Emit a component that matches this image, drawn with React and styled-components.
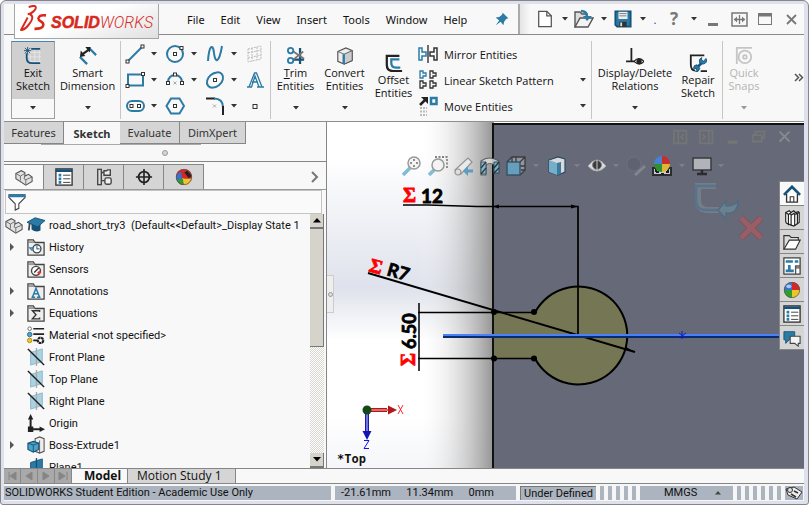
import React from "react";
import styled, { createGlobalStyle, css } from "styled-components";

const ui = '"Noto Sans", "Open Sans", sans-serif';
const narrow = '"Open Sans", "Noto Sans", sans-serif';
const list = 'Roboto, "Liberation Sans", sans-serif';
const blue = "#2b7ba5";
const deep = "#165277";
const ink = "#333";
const grey = "#868686";

const Global = createGlobalStyle`
  *, *::before, *::after { box-sizing: border-box; }
  body { margin: 0; background: #fff; font-family: ${ui}; font-size: 11px; color: #111; }
  button, input { font: inherit; color: inherit; }
  button { display: flex; align-items: center; justify-content: center; padding: 0; border: 0; background: none; white-space: nowrap; }
  svg { display: block; flex: none; }
`;

/* ---------- Frame ---------- */
const Frame = styled.div`
  display: flex; flex-direction: column; height: 100vh; min-height: 400px; overflow: hidden;
  padding: 3px 4px 3px 3px; background: #dfe0ee; border: 1px solid ${grey};
  border-radius: 6px 6px 3px 3px;
`;
const TitleBar = styled.header`
  display: flex; flex: none; height: 31px; background: #f8f8f8; border-bottom: 1px solid #8a8a8a; position: relative;
`;
const LogoBox = styled.div`
  display: flex; align-items: center; gap: 4px; position: relative; z-index: 1;
  width: 145px; height: 35px; margin: 0 0 -4px 10px; padding: 0 0 0 5px; flex: none;
  border: 1px solid #a6a6a6; border-top: 0; background: linear-gradient(160deg, #fff 45%, #e0e0e0);
  svg { margin-bottom: 5px; }
`;
const LogoText = styled.span`
  color: #d8291d; font: italic 700 16px/20px "Liberation Sans", sans-serif; margin-top: 4px;
  -webkit-text-stroke: 0.5px #d8291d;
  span { font-family: Roboto, sans-serif; font-weight: 300; -webkit-text-stroke: 0; }
`;
const MenuBar = styled.nav`
  display: flex; align-items: center; margin-left: 20px; flex: 1; border-right: 2px solid #aaa;
`;
const MenuItem = styled.button`
  height: 30px; padding: 0 8px;
`;
const Pin = styled.button` margin: 0 6px 0 auto; width: 20px; height: 24px; `;
const Quick = styled.div` display: flex; align-items: center; flex: none; padding-left: 12px; background: linear-gradient(90deg, #e4e4e4, #f8f8f8 10px); `;
const IconButton = styled.button`
  width: ${(p) => p.$w || 26}px; height: ${(p) => p.$h || 26}px; flex: none;
`;

/* ---------- Command ribbon ---------- */
const Ribbon = styled.section`
  display: flex; flex: none; height: 87px; padding: 6px 0 2px 7px; background: #f8f8f8;
  border-bottom: 1px solid #8f8f8f; font-family: ${narrow};
`;
const Rule = styled.span` width: 1px; height: 78px; background: #c6c6c6; flex: none; margin: 0 ${(p) => p.$r || 0}px 0 0; `;
const Command = styled.button`
  flex-direction: column; justify-content: flex-start; flex: none; align-self: flex-start;
  width: ${(p) => p.$w}px; height: 78px; padding-top: ${(p) => (p.$low ? 13 : 6)}px; line-height: 13px;
  color: ${(p) => (p.disabled ? "#b4b4b4" : "#111")};
  > svg:first-child { width: 18px; height: 18px; margin-bottom: 1px; }
  > svg:last-child { margin-top: 14px; }
  ${(p) => p.$on && css`
    background: linear-gradient(#d0d0d0 58px, #f8f8f8 58px);
    border: 1px solid #a0a0a0; border-top-color: #4287b5; padding-top: 5px;
    box-shadow: inset 0 -20px 0 -1px #f8f8f8;
  `}
`;
const ToolGrid = styled.div` display: grid; grid-template-columns: repeat(4, 40px); grid-template-rows: repeat(3, 26px); flex: none; width: 145px; overflow: hidden; `;
const ToolCell = styled.div` display: flex; align-items: center; `;
const ListTools = styled.div` display: flex; flex-direction: column; flex: 1; min-width: 150px; `;
const ListTool = styled.button` height: 26px; justify-content: flex-start; gap: 6px; padding-right: 5px; > svg:nth-of-type(2) { margin-left: auto; } `;
const Overflow = styled.button` width: 39px; height: 72px; flex: none; justify-content: flex-end; `;

/* ---------- Body ---------- */
const Body = styled.main` display: flex; flex: 1; min-height: 0; `;
const Side = styled.aside`
  display: flex; flex-direction: column; width: 323px; flex: none; background: #f8f8f8;
  border-right: 1px solid ${grey};
`;
const TabRow = styled.div` display: flex; flex: none; height: 22px; `;
const Tab = styled.button`
  width: ${(p) => p.$w}px; height: 22px; font-size: 11px; color: ${ink};
  background: ${(p) => (p.$on ? "#f8f8f8" : "#d5d5d5")}; font-weight: ${(p) => (p.$on ? 700 : 400)};
  border: solid ${grey}; border-width: ${(p) => (p.$on ? 0 : "0 1px 1px 0")};
`;
const Grip = styled.div`
  display: flex; align-items: center; justify-content: center; height: 18px; flex: none; border-bottom: 1px solid ${grey};
  background: linear-gradient(#aaa, #aaa) 37px 0 / 160px 1px no-repeat;
  span { width: 6px; height: 6px; border-radius: 3px; border: 1px solid #999; background: #d5d5d5; }
`;
const PaneTabs = styled.div` display: flex; flex: none; height: 27px; margin-top: 1px; border-bottom: 1px solid #999; border-top: 1px solid #f8f8f8; `;
const PaneTab = styled.button`
  width: 40px; border: solid ${grey}; border-width: 1px 1px 0 0; background: ${(p) => (p.$on ? "#f8f8f8" : "#d5d5d5")};
  svg { width: 18px; height: 18px; }
`;
const More = styled.button` margin: 0 5px 0 auto; width: 12px; `;
const Filter = styled.label`
  display: flex; align-items: center; gap: 4px; height: 24px; flex: none; margin: 0 4px 0 1px; padding-left: 2px;
  border: 1px solid #c4c4c4; background: #fafafa;
  svg { width: 18px; height: 18px; }
  input { flex: 1; min-width: 0; border: 0; outline: 0; background: none; }
`;
const TreeArea = styled.div` display: flex; flex: 1; min-height: 0; `;
const Tree = styled.ul` flex: 1; min-width: 0; margin: 0; padding: 0; list-style: none; overflow: hidden; font-family: ${list}; `;
const Row = styled.li`
  display: flex; align-items: center; height: 22px; white-space: pre; padding-left: ${(p) => (p.$root ? 1 : 5)}px;
  > svg:nth-of-type(2) { width: 18px; height: 18px; margin: 0 4px 0 ${(p) => (p.$root ? 4 : 10)}px; }
  > svg:first-child { height: 18px; width: ${(p) => (p.$root ? 18 : 8)}px; }
`;
const Scroll = styled.div`
  display: flex; flex-direction: column; width: 14px; margin-right: 2px; flex: none;
  background: repeating-conic-gradient(#d8d6d0 0 25%, #fff 0 50%) 0 0 / 2px 2px;
`;
const ScrollButton = styled.button`
  height: 15px; flex: none; background: #d6d3cb; border: solid #777; border-width: 0 1px 2px 0;
  margin-top: ${(p) => (p.$end ? "auto" : 0)};
`;
const Thumb = styled.div` height: 118px; background: #d6d3cb; border: solid #777; border-width: 0 1px 1px 0; `;

/* ---------- Graphics area ---------- */
const Canvas = styled.section` position: relative; flex: 1; min-width: 0; background: #fff; overflow: hidden; `;
const Sketch = styled.svg` width: 100%; height: 100%; `;
const ViewTools = styled.div`
  position: absolute; top: 31px; left: 0; right: 0; display: flex; justify-content: center; padding-right: 5px; opacity: 0.85;
`;
const DocButtons = styled.div` position: absolute; top: 2px; right: 6px; display: flex; `;
const Confirm = styled.div` position: absolute; top: 59px; right: 40px; display: flex; opacity: 0.6; `;
const TaskPane = styled.div` position: absolute; top: 59px; right: 0; width: 25px; border: solid ${grey}; border-width: 1px 0 0 1px; `;
const TaskButton = styled.button`
  width: 24px; height: 24px; border-bottom: 1px solid ${grey}; background: ${(p) => (p.$on ? "#f9f9f9" : "#d5d5d5")};
  svg { width: 18px; height: 18px; }
`;
const Handle = styled.button`
  position: absolute; left: 0; top: 153px; width: 7px; height: 38px; background: #eee; border: 1px solid #ccc; border-left: 0;
  span { width: 5px; height: 5px; border: 1px solid #999; border-radius: 3px; background: #ddd; }
`;

/* ---------- Bottom ---------- */
const SheetTabs = styled.div` display: flex; flex: none; height: 16px; background: #f8f8f8; border: solid ${grey}; border-width: 1px 0; font-family: ${narrow}; `;
const NavButton = styled.button` width: 17px; height: 14px; background: #a9a9a9; border: solid #888; border-width: 0 1px 0 0; flex: none; `;
const SheetTab = styled.button`
  width: ${(p) => p.$w}px; height: 14px; font-size: 12px; line-height: 14px; font-weight: ${(p) => (p.$on ? 700 : 400)};
  justify-content: flex-start; padding-left: ${(p) => (p.$on ? 12 : 9)}px;
  background: ${(p) => (p.$on ? "#f8f8f8" : "#d5d5d5")}; border: solid ${grey}; border-width: ${(p) => (p.$on ? 0 : "0 1px")};
`;
const Status = styled.footer`
  display: flex; flex: none; height: 17px; padding: 2px 1px 1px 0; gap: 4px; background: #f6f6f6;
  font-family: ${list}; font-size: 11px; line-height: 14px; white-space: nowrap;
`;
const Panel = styled.div`
  display: flex; align-items: center; justify-content: space-around; flex: ${(p) => p.$grow || "none"}; width: ${(p) => p.$w}px; overflow: hidden;
  background: #abb4bf; ${(p) => p.$inset && "border: solid #777; border-width: 1px 0 0 1px;"}
  ${(p) => p.$start && "justify-content: flex-start; padding-left: 1px;"}
`;
const Coordinates = styled(Panel)` justify-content: space-between; padding: 0 22px 0 6px; `;
const Units = styled(Panel)` justify-content: space-between; padding: 0 12px 0 24px; `;
const Stripes = styled.div` width: ${(p) => p.$w}px; flex: none; background: repeating-linear-gradient(90deg, #abb4bf 0 4px, #f6f6f6 4px 8px); `;

/* ---------- Icons ---------- */
const Caret = ({ c = "#333" }) => <svg width="6" height="4"><path d="M0 0h6L3 3.5z" fill={c} /></svg>;
const I = ({ s = 20, children }) => <svg width={s} height={s} viewBox="0 0 20 20" fill="none" stroke={blue} strokeWidth="2">{children}</svg>;
const Sq = ({ x, y }) => <rect x={x - 1.5} y={y - 1.5} width="3" height="3" fill="#fff" stroke={ink} strokeWidth="1" />;

const Line = () => <I><path d="M3 17L17 3" /><Sq x={2.5} y={17.5} /><Sq x={17.5} y={2.5} /></I>;
const Circle = () => <I><circle cx="10" cy="10" r="8" /><Sq x={10} y={10} /><Sq x={16.5} y={4} /></I>;
const Spline = () => <I><path d="M3 17C4 1 8 -1 9 9S14 20 17 2" /></I>;
const Hatch = () => <I><path d="M3 5l13-3v13L3 18zM3 9l13-3M3 14l13-3M7 4v13M12 3v13" stroke="#bbb" strokeWidth="1" strokeDasharray="2 1" /></I>;
const RectI = () => <I><rect x="3" y="4.500" width="15" height="11" /><Sq x={2.5} y={16} /><Sq x={18} y={4} /></I>;
const Arc = () => <I><path d="M3 12a7 7 0 0 1 14 0" /><Sq x={3} y={13} /><Sq x={17} y={13} /><Sq x={10} y={4.5} /><path d="M8.500 11.500l3 3m0-3l-3 3" stroke="#aaa" strokeWidth="1" /></I>;
const Ellipse = () => <I><ellipse cx="10" cy="10" rx="9" ry="6.500" transform="rotate(-40 10 10)" /><Sq x={10} y={10} /></I>;
const LetterA = () => <I><path d="M2 17h5M12 17h7M4 17L9.500 3h2L17 17M6.500 17L10 6l4 11M7 12h6" strokeWidth="1.300" /></I>;
const Slot = () => <I><rect x="2" y="5" width="17" height="10" rx="5" /><Sq x={6.5} y={10} /><Sq x={14} y={10} /></I>;
const Poly = () => <I><path d="M6 2.500h8.500L19 10l-4.500 7.500H6L1.500 10z" /><Sq x={10} y={10} /></I>;
const Fillet = () => <I><path d="M1 2.500h9" stroke="#222" /><path d="M9 2.500q9 0 9 9" /><path d="M18 10v9" stroke="#222" /><path d="M8 8.500l3 3m0-3l-3 3" stroke="#aaa" strokeWidth="1" /></I>;
const Point = () => <I><rect x="8" y="8.500" width="4" height="4" stroke={ink} strokeWidth="1" /></I>;

const ExitIcon = () => <I><path d="M7 2v17M12 2v17M17 2v17M3 6h16M3 11h16M3 16h16" stroke="#e6e6e6" strokeWidth="1" /><path d="M18 2H8M3 7v5q0 6 6 6h9" stroke={deep} /><path d="M0 4h8M4 0v8M1 1l6 6M7 1L1 7" strokeWidth="1" stroke={deep} /></I>;
const DimIcon = () => <I><path d="M1 11l8 8M12 2l7 7" strokeWidth="2.500" /><path d="M4 8l7-5" stroke="#222" strokeWidth="2.500" /><path d="M1 11l1-7 5 6zM13 0l-6 0 5 6z" fill="#222" stroke="none" /></I>;
const TrimIcon = () => <I><path d="M7 14h12M14.500 1v18" strokeWidth="2.500" stroke={deep} /><path d="M7 5l12 8M7 14l11-9" stroke="#777" strokeWidth="2" /><circle cx="4" cy="4" r="3" /><circle cx="4" cy="15" r="3" /></I>;
const ConvertIcon = () => <I><path d="M2 5l9-4 7 3v11l-9 4-7-3z" fill="#eee" stroke="#555" strokeWidth="1.300" /><path d="M9 8l9-4v11l-9 4z" fill="#ccc" stroke="#555" strokeWidth="1" /><path d="M2 5l7 3" stroke="#666" strokeWidth="1" /><path d="M8.500 8v11" strokeWidth="2.500" /></I>;
const OffsetIcon = () => <I><path d="M16 2H2v10q0 7 7 7h10" stroke="#222" strokeWidth="2.500" /><path d="M16 6H7v4q0 5 5 5h5" strokeWidth="2.500" /></I>;
const MirrorIcon = () => <I><path d="M1 4v12h3v-4h4V8H4V4z" strokeWidth="1.500" /><path d="M10 1v18" stroke="#222" strokeWidth="1.300" /><path d="M19 4v12h-3v-4h-4V8h4V4z" stroke={ink} strokeWidth="1.500" /></I>;
const PatternIcon = () => <I>{[[0, 0], [10, 0], [0, 10], [10, 10]].map(([x, y], i) => <path key={i} transform={`translate(${x} ${y})`} d="M2 1v7h3V6h3V3H5V1z" stroke={i ? ink : blue} strokeWidth="1.300" />)}</I>;
const MoveIcon = () => <I><path d="M2 9l6-6" stroke="#222" strokeWidth="2.500" /><path d="M3 1h7v7z" fill="#222" stroke="none" /><rect x="13" y="2" width="5.500" height="6" strokeWidth="2.500" /><path d="M2 12h7M2 19h7M2 15.500h7" stroke="#bbb" strokeDasharray="2 1" /></I>;
const RelIcon = () => <I><path d="M6 1v15M0 16h11" stroke="#222" /><path d="M9 16q5-6 11 0q-5 6-11 0" fill="#fff" stroke="#222" strokeWidth="1.300" /><circle cx="14.500" cy="16" r="2" fill="#222" stroke="#222" /></I>;
const RepairIcon = () => <I><path d="M17 1.500H2v10q0 7 5 7M13 19h7" stroke="#222" /><path d="M8 16l8-8" stroke={deep} strokeWidth="3" /><path d="M19 5l-3 3-2-1 0-3q-4 2-2 6q5 3 8-2z" fill={blue} stroke={deep} strokeWidth="1" /><path d="M5 16l3 0 1 3-2 1q4 0 5-4l-3-4q-4 0-4 4z" fill={blue} stroke={deep} strokeWidth="1" /></I>;
const SnapIcon = () => <I><path d="M2 19V1h17" stroke="#c5c5c5" /><circle cx="11" cy="11" r="7" stroke="#c5c5c5" /><circle cx="11" cy="11" r="2" stroke="#c5c5c5" /></I>;

const Logo = () => (
  <svg width="27" height="27" viewBox="0 0 28 26" preserveAspectRatio="none" fill="none" stroke="#d8291d" strokeWidth="2" strokeLinejoin="round">
    <path d="M9 2Q18 -1 16 4Q13 8 8 9" /><path d="M10 9Q16 11 9 19Q5 24 1 24L8 12" />
    <path d="M27 10Q20 9 19 13C19 16 26 16 24 20Q23 23 15 23" strokeWidth="2.500" />
  </svg>
);
const PinI = () => <I s={14}><path d="M11 1l8 8-3 1-3 4-1 5-4-5-7 5 5-7-5-4 5-1 4-3z" fill={blue} stroke="none" /></I>;
const NewI = () => <I s={18}><path d="M3 1.500h9l5 5v12H3z" fill="#fff" stroke="#555" strokeWidth="1.400" /><path d="M12 1.500v5h5" stroke="#555" strokeWidth="1.400" /></I>;
const OpenI = () => <I><path d="M1 18V3h5l2 2h5v4" fill="#ddd" stroke="#555" strokeWidth="1.400" /><path d="M1 18L6 9h13l-5 9z" fill="#f3f3f3" stroke="#555" strokeWidth="1.400" /><path d="M7 2q6 0 6 6" strokeWidth="2.500" /><path d="M9 7h9l-5 5z" fill={blue} stroke="none" /></I>;
const SaveI = () => <I s={18}><path d="M1.500 1.500h17v17h-15l-2-2z" fill={blue} stroke={deep} /><path d="M5 2h10v8H5z" fill="#eee" stroke="none" /><path d="M6 4h8M6 6.500h8" stroke="#777" strokeWidth="1" /><path d="M6 13h8v6H6z" fill="#333" stroke="none" /><path d="M8 14v4" stroke="#ddd" /></I>;
const MinI = () => <svg width="10" height="14"><path d="M0 12.500h10" stroke="#777" strokeWidth="3" /></svg>;
const SpanI = () => <svg width="17" height="15" fill="none" stroke="#777"><rect x="1" y="1" width="15" height="13" strokeWidth="1.500" /><path d="M8.500 3v9M3 7.500h11" strokeWidth="1.300" /><path d="M3 7.500l3-3v6zM14 7.500l-3-3v6z" fill="#777" stroke="none" /></svg>;
const MaxI = () => <svg width="14" height="12" fill="none" stroke="#777"><rect x=".5" y=".5" width="13" height="11" /><path d="M0 2h14" strokeWidth="3" /></svg>;
const CloseI = ({ c = "#777" }) => <svg width="11" height="11"><path d="M1 1l9 9M10 1l-9 9" stroke={c} strokeWidth="1.800" /></svg>;
const HelpMark = styled.span` font: 700 17px/20px "Noto Sans", sans-serif; color: #777; `;
const Dot = styled.span` width: 12px; color: #24489c; text-align: center; flex: none; `;

const Part = () => <I><path d="M1 6l6-3 4 2v4l4-2 4 3v5l-7 4L1 12z" fill="#e2e2e2" stroke="#555" strokeWidth="1.200" /><path d="M1 6l5 3v5M6 9l5-3M11 9l-1 3 2 1v5M12 13l7-3" stroke="#666" strokeWidth="1" /></I>;
const ListI = () => <I><rect x="1" y="1" width="18" height="18" fill="#fff" stroke="#333" strokeWidth="1.500" /><path d="M1 3h18" stroke={deep} strokeWidth="3" /><path d="M4 8h3M4 12h3M4 16h3" stroke={blue} strokeWidth="3" /><path d="M9 8h8M9 12h8M9 16h8" stroke="#333" strokeWidth="1" /></I>;
const ConfigI = () => <I><path d="M7 5h5M7 14h5" stroke="#444" strokeWidth="1.500" /><rect x="3" y="1.500" width="4" height="17" fill="#ddd" stroke="#444" strokeWidth="1.500" /><path d="M10 3h3l1-1h3v6h-7z" fill="#eee" stroke="#444" strokeWidth="1.500" /><rect x="11" y="11" width="7" height="7" rx="2" fill="#eee" stroke="#444" strokeWidth="1.500" /></I>;
const TargetI = () => <I><circle cx="10" cy="10" r="6" stroke="#222" /><path d="M10 1v18M1 10h18" stroke="#222" strokeWidth="1.800" /></I>;
const Ball = () => <I><g stroke="none"><path d="M10 10V1A9 9 0 0 0 1 10z" fill="#3b6fd0" /><path d="M10 10V1a9 9 0 0 1 9 9z" fill="#d42828" /><path d="M10 10h9a9 9 0 0 1-9 9z" fill="#efc52e" /><path d="M10 10v9a9 9 0 0 1-9-9z" fill="#2d9f2d" /></g><circle cx="10" cy="10" r="8.500" stroke="#555" strokeWidth=".8" /><ellipse cx="6.500" cy="6" rx="3" ry="2" fill="#fff" opacity=".6" stroke="none" /></I>;
const Appearance = () => <I><g stroke="none"><circle cx="10" cy="10" r="9" fill="#d42828" /><path d="M1 10q3-6 6-5l1 7v6a9 9 0 0 1-7-8" fill="#3b6fd0" /><path d="M8 11q6 2 11 0q-2 8-9 8z" fill="#efc52e" /><path d="M2 13l7-1v7q-5 0-7-6" fill="#2d9f2d" /></g><path d="M12 4l5 6" stroke="#222" strokeWidth="4" /><circle cx="10" cy="10" r="8.500" stroke="#555" strokeWidth=".8" /></I>;
const Funnel = () => <I><path d="M1 2h18v3l-7 7v5l-4 2v-7L1 5z" fill="#fff" stroke="#444" strokeWidth="1.200" /><path d="M1 3h18" strokeWidth="3.500" /></I>;
const Cap = () => <I><path d="M5 9v6q5 4 10 1V9z" fill={deep} stroke="none" /><path d="M0 7l9-5 11 3-8 7z" fill={blue} stroke={deep} strokeWidth="1" /><path d="M3 8l-1 8" stroke="#444" strokeWidth="2" /></I>;
const Folder = ({ children }) => <I><path d="M1 19V2h6l2 3h10v14z" fill="#eee" stroke="#444" strokeWidth="1.400" /><path d="M1 4.500h8" stroke="#777" strokeWidth="1.500" />{children}</I>;
const Hist = () => <Folder><circle cx="11" cy="12" r="4.500" fill="#fff" stroke="#444" strokeWidth="1.500" /><path d="M11 9v3h3M6 14l-3-3h5" strokeWidth="1.300" /></Folder>;
const Sens = () => <Folder><circle cx="10" cy="12" r="5" fill="#fff" stroke="#444" strokeWidth="1.500" /><path d="M8 14l5-5" stroke="#333" strokeWidth="1.500" /><path d="M12 15l3-2" stroke="#e33" strokeWidth="3" /></Folder>;
const Annot = () => <Folder><path d="M5 17h4M11 17h4M6 17l4-10 4 10M7.500 13h5" strokeWidth="1.700" /></Folder>;
const Equa = () => <Folder><path d="M14 9V7.500H6l4 4.500-4 4.500h8V15" stroke="#333" strokeWidth="1.500" /></Folder>;
const Mat = () => <I><path d="M7 3h12M7 9h12" stroke="#222" strokeWidth="1.800" /><circle cx="3" cy="3" r="2" fill="#fff" stroke="#666" strokeWidth="1" /><circle cx="3" cy="9.500" r="2.500" fill="#46a6d5" stroke="#367" strokeWidth="1" /><circle cx="3" cy="16" r="2.500" fill="#f4c430" stroke="#a80" strokeWidth="1" /><path d="M7 16h4" stroke="#222" /><circle cx="15" cy="16" r="3" stroke="#222" strokeWidth="2.500" strokeDasharray="3 .6" /></I>;
const Plane = ({ solid }) => <I><path d="M4 5l13-4v14L4 19z" fill={solid ? blue : "#a9d2e2"} stroke={solid ? deep : "#8bb4c5"} strokeWidth="1" /><path d="M10.500 0v20" stroke={solid ? deep : "#aaa"} strokeWidth="1.500" />{!solid && <path d="M1 1l18 18" stroke="#222" strokeWidth="1.600" />}</I>;
const Origin = () => <I><path d="M4 4v13h12" stroke="#222" strokeWidth="2.200" /><path d="M1 6l3-6 3 6zM14 14l6 3-6 3zM1 14h6v6H1z" fill="#222" stroke="none" /></I>;
const Extrude = () => <I><path d="M9 3l5-2 5 2v14l-5 2-5-2z" fill="#eee" stroke="#555" strokeWidth="1.200" /><path d="M14 5v14" stroke="#555" strokeWidth="1" /><path d="M1 8l6-2 6 2v7l-6 3-6-3z" fill="#4ba1c8" stroke={deep} strokeWidth="1.200" /><path d="M1 8l6 2 6-2M7 10v8" stroke={deep} strokeWidth="1" /></I>;
const Twist = ({ on }) => <svg width="8" height="18"><path d="M1 5l4 4-4 4z" fill={on ? "#555" : "none"} /></svg>;

const ZoomI = ({ area }) => <I><path d="M8 12l-7 7" stroke="#6fb0d0" strokeWidth="3.500" />{area && <path d="M7 1h12v12" stroke="#444" strokeDasharray="2 1.500" strokeWidth="1.300" />}<circle cx={area ? 10 : 12} cy={area ? 9 : 7} r="6" fill="#f3f3f3" stroke="#888" strokeWidth="1.500" />{!area && <path d="M12 3v2M12 9v2M8 7h2M14 7h2" stroke="#555" strokeWidth="1.500" />}</I>;
const PrevI = () => <I><path d="M1 14L14 2l4 4L7 18z" fill="#eee" stroke="#888" strokeWidth="1.200" /><circle cx="4" cy="16" r="3" fill="#ddd" stroke="#888" strokeWidth="1.200" /><path d="M19 15h-8" stroke="#4994c0" strokeWidth="3" /><path d="M9 15l5-5v10z" fill="#4994c0" stroke="none" /></I>;
const SectionI = () => <I><path d="M1 5q8-6 18 0v12h-5V9q-4-3-8 0v10H1z" fill="#ddd" stroke="#555" strokeWidth="1.200" /><path d="M1 6h5v12H1zM14 6h5v11h-5z" fill="#7bb9d6" stroke="#254c60" strokeWidth="1" /><path d="M1 12l5-6M1 18l5-6M14 12l5-6M14 17l5-5" stroke="#222" strokeWidth="1.200" /></I>;
const OrientI = () => <I><path d="M1 6l5-5h13v13l-5 5M14 6l5-5" fill="#9a9ca6" stroke="#333" strokeWidth="1.300" /><path d="M6 1v5M10 1v5M14 10h5M15 14h4" stroke="#333" strokeWidth="1.300" /><rect x="1" y="6" width="13" height="13" fill="#68a8c7" stroke="#254c60" strokeWidth="1.300" /></I>;
const CubeI = () => <I><path d="M2 4l9-3 7 2v13l-7 3-9-3z" fill="#eee" stroke="#246" strokeWidth="1.200" /><path d="M2 4l8 3v12l-8-3z" fill="#79bad8" stroke="none" /><path d="M10 7l4-1v12l-4 1z" fill="#357da2" stroke="none" /></I>;
const EyeI = () => <I><path d="M1 10q9-12 18 0q-9 10-18 0" fill="#eee" stroke="#bbb" strokeWidth="1" /><circle cx="10" cy="9" r="4.500" fill="#333" stroke="#888" strokeWidth="1" /><path d="M10 4v10" stroke="#ddd" strokeWidth="1" /></I>;
const EditI = () => <I><circle cx="8" cy="8" r="7" fill="#5d6170" stroke="#707380" strokeWidth="1" /><path d="M9 19l10-9" stroke="#888b94" strokeWidth="3" /></I>;
const SceneI = () => <I><path d="M1 12h18v7H1z" fill="#ddd" stroke="#222" /><path d="M4 16h3M9 18h3M14 16h3M4 12v4M16 12v4" stroke="#111" strokeWidth="2" /><g stroke="none"><path d="M10 8V0a8 8 0 0 0-8 8z" fill="#4785e0" /><path d="M10 8V0a8 8 0 0 1 8 8z" fill="#d22" /><path d="M10 8h8a8 8 0 0 1-8 8z" fill="#efc52e" /><path d="M10 8v8a8 8 0 0 1-8-8z" fill="#292" /></g></I>;
const ScreenI = () => <I><rect x="1" y="2" width="18" height="12" fill="#bfc1c8" stroke="#333" strokeWidth="1.500" /><path d="M10 14v4M5 18h10" stroke="#222" strokeWidth="2.500" /></I>;
const Home = () => <I><path d="M4 10v9h12v-9" fill="#fff" stroke="#333" strokeWidth="1.500" /><path d="M1 11l9-9 9 9" strokeWidth="3" stroke={deep} /><path d="M8 19v-6h4v6" stroke="#333" strokeWidth="1.200" /></I>;
const Books = () => <I><path d="M3 4l4-2 2 2 3-2 2 2 3-1 1 1v11l-6 4-8-3-1-2z" fill="#fff" stroke="#222" strokeWidth="1.300" /><path d="M3 4l3 2v12M7 5l2 1v13M11 5l2 1v13M6 6l3-2M9 7l4-3M13 6l5-2M16 5v12" stroke="#222" strokeWidth="1.300" /></I>;
const FolderOpen = () => <I><path d="M1 18V3h6l2 2h8v3" fill="#ddd" stroke="#333" strokeWidth="1.300" /><path d="M1 18L7 8h12l-5 10z" fill="#fff" stroke="#333" strokeWidth="1.300" /></I>;
const Palette = () => <I><rect x="1" y="1" width="18" height="18" fill="#fff" stroke="#333" strokeWidth="1.300" /><path d="M3 5h8M13 5h4M7 9v5M3 15.500h9" stroke={blue} strokeWidth="3" /><path d="M14 19v-9h5M14 12h5" stroke="#555" strokeWidth="1.500" /></I>;
const Chat = () => <I><path d="M1 3h12v9H7l-4 4v-4H1z" fill={blue} stroke={deep} strokeWidth="1" /><path d="M8 8h11v8h-2v3l-4-3H8z" fill="#f4f4f4" stroke="#444" strokeWidth="1.200" /></I>;

const docPaths = [
  "M2 3h14v14H2zM7 3v14M13 7l-3 3 3 3", "M2 3h14v14H2zM12 3v14M5 7l3 3-3 3", "M4 15h11M4 16.500h11",
  "M3 8h10v7H3zM6 8V4h10v7h-3", "M4 4l11 11M15 4L4 15",
];
const docNames = ["Tile left", "Tile right", "Minimize document", "Restore document", "Close document"];

/* ---------- Data ---------- */
const grid = [
  [Line, 1, "Line"], [Circle, 1, "Circle"], [Spline, 1, "Spline"], [Hatch, 0, "Sketch plane"],
  [RectI, 1, "Rectangle"], [Arc, 1, "Arc"], [Ellipse, 1, "Ellipse"], [LetterA, 0, "Text"],
  [Slot, 1, "Slot"], [Poly, 0, "Polygon"], [Fillet, 1, "Fillet"], [Point, 0, "Point"],
];
const tree = [
  [Hist, "History", 1], [Sens, "Sensors"], [Annot, "Annotations", 1], [Equa, "Equations", 1], [Mat, "Material <not specified>"],
  [Plane, "Front Plane"], [Plane, "Top Plane"], [Plane, "Right Plane"], [Origin, "Origin"], [Extrude, "Boss-Extrude1", 1],
];
const ZoomArea = () => <ZoomI area />;
const view = [[ZoomI, "Zoom to fit"], [ZoomArea, "Zoom to area"], [PrevI, "Previous view"], [SectionI, "Section view"], [OrientI, "View orientation", 15], [CubeI, "Display style", 14], [EyeI, "Hide or show", 13], [EditI, "Edit appearance"], [SceneI, "Apply scene", 14], [ScreenI, "View settings", 13]];
const tasks = [[Home, "Home"], [Books, "Design library"], [FolderOpen, "File explorer"], [Palette, "View palette"], [Ball, "Appearances"], [ListI, "Custom properties"], [Chat, "Forum"]];

const Cmd = ({ icon: Icon, top, bottom, caret = true, ...p }) => (
  <Command {...p}><Icon /><span>{top}</span><span>{bottom}</span>{caret && <Caret c={p.disabled ? "#999" : ink} />}</Command>
);

const Drawing = () => (
  <Sketch role="img" aria-label="Sketch with dimensions 12, R7 and 6.50">
    <defs>
      <linearGradient id="sky" x1="0" y1="0" x2="0" y2="1"><stop offset=".1" stopColor="#fff" /><stop offset=".48" stopColor="#dfe2ec" /><stop offset=".63" stopColor="#fff" /><stop offset=".85" stopColor="#fff" /><stop offset="1" stopColor="#f5f6f9" /></linearGradient>
      <linearGradient id="shade"><stop offset="0" stopColor="#fff" stopOpacity="0" /><stop offset=".4" stopColor="#c8c8c8" stopOpacity=".3" /><stop offset="1" stopColor="#929292" /></linearGradient>
    </defs>
    <rect width="167" height="100%" fill="url(#sky)" />
    <rect x="90" width="77" height="100%" fill="url(#shade)" />
    <rect x="166" y="2" width="100%" height="100%" fill="#666977" stroke="#111" strokeWidth="2" />
    <g transform="translate(-327 -122)" fill="none" stroke="#000" strokeWidth="2">
      <path d="M494 312.500H535A49 49 0 1 1 535 358.500H494" fill="#747654" stroke="none" />
      <path d="M535 312.500A49 49 0 1 1 535 358.500" />
      <path d="M418 312.500H535M418 358.500H535M419 303v68" strokeWidth="1.500" />
      <path d="M403 205h25l49 1.500h101V335" strokeWidth="1.700" />
      <path d="M493 206.500l6-2v4zM578 206.500l-7-2v4zM635 352l-9-5-1 3z" fill="#000" stroke="none" />
      <path d="M368 273L635 352" />
      <g fill="#000" stroke="none"><circle cx="494" cy="312" r="3" /><circle cx="494" cy="358.500" r="3" /><circle cx="534" cy="312" r="3" /><circle cx="534" cy="358.500" r="3" /></g>
      <path d="M443 335h338" stroke="#4c80f5" /><path d="M443 337h338" stroke="#092b70" />
      <path d="M682 331v8M679 333l7 5M686 333l-7 5" stroke="#1418b8" strokeWidth="1" />
      <g fill="#000" stroke="#000" strokeWidth=".8" fontFamily="Lato, sans-serif" fontWeight="700" fontSize="19">
        <text x="421" y="203">12</text>
        <text transform="translate(386 275) rotate(16)" fontSize="18">R7</text>
        <text transform="translate(416 349) rotate(-90)" fontSize="18">6.50</text>
      </g>
      <g fill="#f00" stroke="#f00" strokeWidth=".8" fontFamily="Liberation Serif, serif" fontWeight="700" fontSize="20">
        <text x="403" y="202">Σ</text><text transform="translate(368 271) rotate(16)">Σ</text><text transform="translate(415 366) rotate(-90)">Σ</text>
      </g>
      <path d="M367 410h20" stroke="#a51d1d" strokeWidth="4" /><path d="M370 410h20" stroke="#ee6464" strokeWidth="2" /><path d="M388 405.500l9 4.500-9 4.500z" fill="#b21818" stroke="none" />
      <path d="M367 412v22" stroke="#1a1aa8" strokeWidth="4" /><path d="M367 412v22" stroke="#7373e2" strokeWidth="2" /><path d="M362.500 431h9L367 440z" fill="#1414b0" stroke="none" />
      <circle cx="367" cy="410" r="4.500" fill="#154815" stroke="none" />
      <path d="M398 405l5 9M403 405l-5 9" stroke="#f22" strokeWidth="1" /><path d="M364 440.500h5l-5 8h5" stroke="#11f" strokeWidth="1" />
      <text x="337" y="463" fill="#111" stroke="none" fontFamily="DejaVu Sans Mono, monospace" fontWeight="700" fontSize="12">*Top</text>
    </g>
  </Sketch>
);

export default function App() {
  return (
    <>
      <Global />
      <Frame>
        <TitleBar>
          <LogoBox><Logo /><LogoText>SOLID<span>WORKS</span></LogoText></LogoBox>
          <MenuBar>
            {["File", "Edit", "View", "Insert", "Tools", "Window", "Help"].map((m) => <MenuItem key={m}>{m}</MenuItem>)}
            <Pin aria-label="Pin menu"><PinI /></Pin>
          </MenuBar>
          <Quick>
            {[[NewI, "New"], [OpenI, "Open"], [SaveI, "Save"]].map(([C, n]) => (
              <React.Fragment key={n}><IconButton aria-label={n}><C /></IconButton><IconButton $w={13} aria-label={`${n} options`}><Caret /></IconButton></React.Fragment>
            ))}
            <Dot>.</Dot>
            <IconButton aria-label="Help"><HelpMark>?</HelpMark></IconButton>
            <IconButton $w={13} aria-label="Help options"><Caret /></IconButton>
            <IconButton aria-label="Minimize"><MinI /></IconButton>
            <IconButton aria-label="Span displays"><SpanI /></IconButton>
            <IconButton aria-label="Maximize"><MaxI /></IconButton>
            <IconButton aria-label="Close"><CloseI /></IconButton>
          </Quick>
        </TitleBar>

        <Ribbon>
          <Cmd icon={ExitIcon} top="Exit" bottom="Sketch" $w={44} $on />
          <Cmd icon={DimIcon} top="Smart" bottom="Dimension" $w={65} />
          <Rule $r={4} />
          <ToolGrid>
            {grid.map(([C, caret, n]) => (
              <ToolCell key={n}><IconButton $w={20} aria-label={n}><C /></IconButton>{caret ? <IconButton $w={18} aria-label={`${n} options`}><Caret /></IconButton> : null}</ToolCell>
            ))}
          </ToolGrid>
          <Rule />
          <Cmd icon={TrimIcon} top={<><u>T</u>rim</>} bottom="Entities" $w={49} />
          <Cmd icon={ConvertIcon} top="Convert" bottom="Entities" $w={49} />
          <Cmd icon={OffsetIcon} top="Offset" bottom="Entities" $w={49} $low caret={false} />
          <ListTools>
            <ListTool><MirrorIcon />Mirror Entities</ListTool>
            <ListTool><PatternIcon />Linear Sketch Pattern<Caret /></ListTool>
            <ListTool><MoveIcon />Move Entities<Caret /></ListTool>
          </ListTools>
          <Rule $r={4} />
          <Cmd icon={RelIcon} top="Display/Delete" bottom="Relations" $w={78} />
          <Cmd icon={RepairIcon} top="Repair" bottom="Sketch" $w={48} $low caret={false} />
          <Rule />
          <Cmd icon={SnapIcon} top="Quick" bottom="Snaps" $w={42} disabled />
          <Overflow aria-label="More commands">
            <svg width="10" height="9" fill="none" stroke="#555" strokeWidth="1.500"><path d="M1 1l3.500 3.500L1 8M5 1l3.500 3.500L5 8" /></svg>
          </Overflow>
        </Ribbon>

        <Body>
          <Side>
            <TabRow>
              <Tab $w={60}>Features</Tab><Tab $w={56} $on>Sketch</Tab><Tab $w={60}>Evaluate</Tab><Tab $w={66}>DimXpert</Tab>
            </TabRow>
            <Grip><span /></Grip>
            <PaneTabs>
              {[[Part, "Feature tree"], [ListI, "Properties"], [ConfigI, "Configurations"], [TargetI, "Dimensions"], [Appearance, "Display"]].map(([C, n], i) => <PaneTab key={n} $on={!i} aria-label={n}><C /></PaneTab>)}
              <More aria-label="More panes"><svg width="8" height="12" fill="none" stroke="#777" strokeWidth="2"><path d="M1 1l5 5-5 5" /></svg></More>
            </PaneTabs>
            <Filter><Funnel /><input aria-label="Filter tree" /></Filter>
            <TreeArea>
              <Tree>
                <Row $root><Part /><Cap />{"road_short_try3  (Default<<Default>_Display State 1"}</Row>
                {tree.map(([C, n, on]) => <Row key={n}><Twist on={on} /><C />{n}</Row>)}
                <Row><Twist /><Plane solid />Plane1</Row>
              </Tree>
              <Scroll>
                <ScrollButton aria-label="Scroll up"><svg width="8" height="5"><path d="M0 4.500h8L4 0z" /></svg></ScrollButton>
                <Thumb />
                <ScrollButton $end aria-label="Scroll down"><svg width="8" height="5"><path d="M0 0h8L4 4.500z" /></svg></ScrollButton>
              </Scroll>
            </TreeArea>
          </Side>
          <Canvas>
            <Drawing />
            <Handle aria-label="Collapse panel"><span /></Handle>
            <DocButtons>
              {docPaths.map((d, i) => <IconButton key={d} aria-label={docNames[i]}><svg width="18" height="18" viewBox="0 0 20 20" fill="none" stroke={i === 4 ? "#888a90" : "#747674"} strokeWidth="2"><path d={d} /></svg></IconButton>)}
            </DocButtons>
            <ViewTools>
              {view.map(([C, n, w]) => <React.Fragment key={n}><IconButton aria-label={n}><C /></IconButton>{w && <IconButton $w={w} aria-label={`${n} options`}><Caret c="#83858d" /></IconButton>}</React.Fragment>)}
            </ViewTools>
            <Confirm>
              <svg width="80" height="60" viewBox="0 0 80 60" fill="none">
                <path d="M32 5H14v14q0 10 10 10h13" stroke="#a6b9c8" strokeWidth="6" opacity=".4" /><path d="M32 5H12v14q0 10 10 10h15" stroke="#4b7d99" strokeWidth="2.500" />
                <path d="M34 29l8-9v5q10 0 12-6q0 15-12 13v6z" fill="#6d91a5" stroke="#426f8a" strokeWidth="1.500" />
                <path d="M57 37l20 20M77 37L57 57" stroke="#924651" strokeWidth="7" /><path d="M57 37l20 20M77 37L57 57" stroke="#b8575c" strokeWidth="5" />
              </svg>
            </Confirm>
            <TaskPane>{tasks.map(([C, n], i) => <TaskButton key={n} $on={!i} aria-label={n}><C /></TaskButton>)}</TaskPane>
          </Canvas>
        </Body>

        <SheetTabs>
          {["M5 1v8M12 1L6 5l6 4z", "M11 1L5 5l6 4z", "M5 1l6 4-6 4z", "M12 1v8M4 1l6 4-6 4z"].map((d, i) => <NavButton key={d} aria-label={["First", "Previous", "Next", "Last"][i]}><svg width="16" height="10"><path d={d} fill="#858585" stroke="#858585" /></svg></NavButton>)}
          <SheetTab $w={55} $on>Model</SheetTab><SheetTab $w={109}>Motion Study 1</SheetTab>
        </SheetTabs>
        <Status>
          <Panel $grow="1" $start>SOLIDWORKS Student Edition - Academic Use Only</Panel>
          <Coordinates $w={181}><span>-21.61mm</span><span>11.34mm</span><span>0mm</span></Coordinates>
          <Panel $w={76} $inset>Under Defined</Panel>
          <Stripes $w={36} />
          <Units $w={93}><span>MMGS</span><svg width="6" height="4"><path d="M0 3.500h6L3 0z" fill="#444" /></svg></Units>
          <Stripes $w={44} />
          <Panel $w={18}><svg width="18" height="14" viewBox="0 0 18 14"><path d="M1 3l8-2 8 5-5 7-9-4z" fill="#eee" stroke="#333" /><path d="M9 5l4 2M6 8l5 3" stroke="#333" strokeWidth="1.500" /><circle cx="5" cy="4" r="2.500" fill="#ddd" stroke="#333" /></svg></Panel>
        </Status>
      </Frame>
    </>
  );
}
